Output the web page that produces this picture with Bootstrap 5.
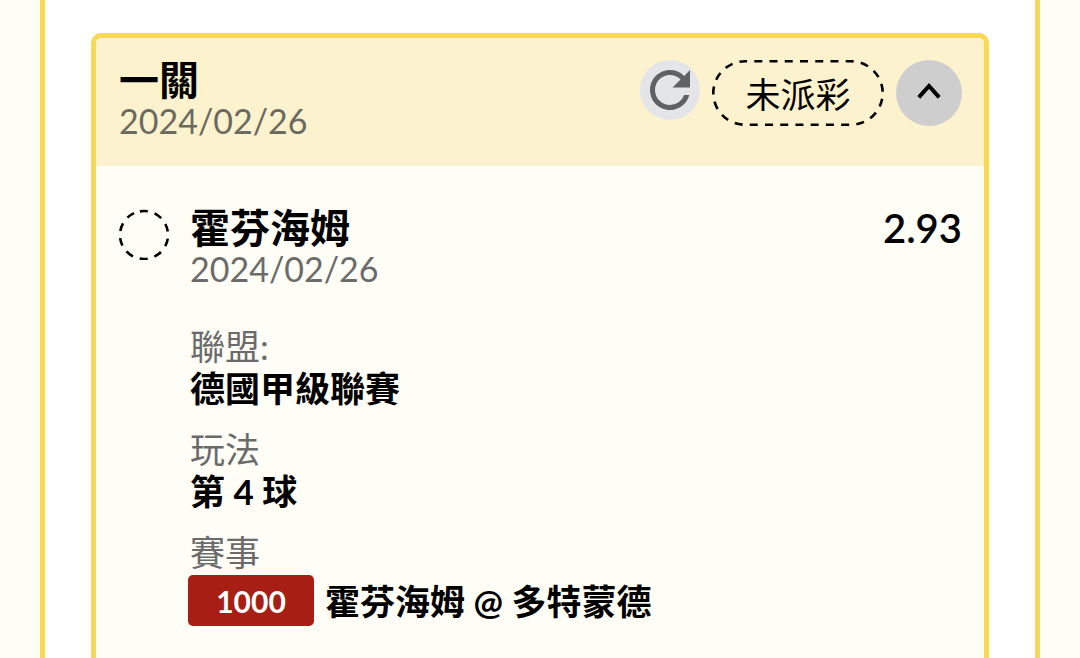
<!DOCTYPE html>
<html lang="zh-Hant">
<head>
<meta charset="utf-8">
<meta name="viewport" content="width=device-width, initial-scale=1">
<title>一關</title>
<link href="https://cdn.jsdelivr.net/npm/bootstrap@5.3.0/dist/css/bootstrap.min.css" rel="stylesheet">
<style>
  body { background: #fefef6; color: #000; font-family: Lato, "Noto Sans CJK TC", sans-serif; font-size: 35px; line-height: 42px; overflow-x: hidden; }
  .slip-panel { margin: 0 40px; padding: 33px 46px 0; min-height: 100vh; border: solid #f8d854; border-width: 0 5px; background: #fff; }
  .bet-card { border: 5px solid #f8d854; border-bottom-width: 0; border-radius: 10px 10px 0 0; background: #fefef6; min-height: calc(100vh - 33px); color: #000; }
  .bet-head { background: #fdf2ce; border: 0; border-radius: 5px 5px 0 0; padding: 22px 22px 22px 23px; min-height: 128px; }
  .bet-title { font-size: 40px; line-height: 40px; font-weight: 600; margin: 0; }
  .bet-date { color: #6b6a61; font-size: 34px; }
  .bet-body { padding: 42px 22px 32px 23px; }
  .bet-body .bet-date { color: #6b6b6b; }
  .bet-tools { gap: 12px; }
  .refresh-btn, .toggle-btn { border: 0; border-radius: 50%; padding: 0; display: block; }
  .refresh-btn { width: 60px; height: 60px; background: #e4e5e8; }
  .toggle-btn { width: 66px; height: 66px; background: #cecece; }
  .refresh-btn svg, .toggle-btn svg { display: block; }
  .status-pill { width: 172px; height: 66px; line-height: 68px; }
  .dash-line { fill: none; stroke: #000; stroke-width: 2.6; }
  .leg-name { gap: 21px; }
  .leg-odds { font-size: 40px; line-height: 40px; font-weight: 600; }
  .leg-info { margin: 35px 0 0 71px; }
  .leg-info dt { color: #6b6b6b; font-weight: 400; }
  .leg-info dd { font-weight: 700; margin: 0 0 18px; line-height: 43px; }
  .leg-info dd.match-row { gap: 11px; line-height: 53px; padding-top: 2px; }
  .match-code { background: #a61e14; color: #fff; width: 126px; height: 51px; border-radius: 5px; font-size: 30px; margin-left: -2px; }
</style>
</head>
<body>
<main class="slip-panel">
  <article class="card bet-card">
    <header class="card-header bet-head d-flex justify-content-between align-items-start">
      <div>
        <h1 class="bet-title">一關</h1>
        <time class="bet-date d-block" datetime="2024-02-26">2024/02/26</time>
      </div>
      <div class="bet-tools d-flex align-items-start">
        <button type="button" class="refresh-btn" aria-label="重新整理">
          <svg width="60" height="60" viewBox="0 0 24 24" aria-hidden="true">
            <path fill="#606164" d="M17.65 6.35A7.96 7.96 0 0 0 12 4c-4.42 0-7.99 3.58-7.99 8s3.57 8 7.99 8c3.73 0 6.84-2.55 7.73-6h-2.08A5.99 5.99 0 0 1 12 18c-3.31 0-6-2.69-6-6s2.69-6 6-6c1.66 0 3.14.69 4.22 1.78L13 11h7V4z"/>
          </svg>
        </button>
        <div class="status-pill position-relative text-center">
          <svg class="position-absolute top-0 start-0" width="172" height="66" viewBox="0 0 172 66" aria-hidden="true">
            <rect class="dash-line" x="1.3" y="1.3" width="169.4" height="63.4" rx="31.7" stroke-dasharray="8 7.23" stroke-dashoffset="-9.3"/>
          </svg>
          未派彩
        </div>
        <button type="button" class="toggle-btn" aria-label="收合">
          <svg width="66" height="66" viewBox="0 0 66 66" aria-hidden="true">
            <path d="M22.8 37.3 33 26 43.2 37.3" fill="none" stroke="#000" stroke-width="4"/>
          </svg>
        </button>
      </div>
    </header>
    <section class="card-body bet-body">
      <div class="d-flex justify-content-between align-items-start">
        <div class="leg-name d-flex">
          <svg width="50" height="52" viewBox="0 0 50 52" aria-hidden="true">
            <circle class="dash-line" cx="25" cy="27" r="24" stroke-dasharray="8 7.08" transform="rotate(-100 25 27)"/>
          </svg>
          <div>
            <h2 class="bet-title">霍芬海姆</h2>
            <time class="bet-date d-block" datetime="2024-02-26">2024/02/26</time>
          </div>
        </div>
        <div class="leg-odds">2.93</div>
      </div>
      <dl class="leg-info">
        <dt>聯盟:</dt>
        <dd>德國甲級聯賽</dd>
        <dt>玩法</dt>
        <dd>第 4 球</dd>
        <dt>賽事</dt>
        <dd class="match-row d-flex">
          <span class="match-code text-center">1000</span>
          <span>霍芬海姆 @ 多特蒙德</span>
        </dd>
      </dl>
    </section>
  </article>
</main>
<script src="https://cdn.jsdelivr.net/npm/bootstrap@5.3.0/dist/js/bootstrap.bundle.min.js"></script>
</body>
</html>
